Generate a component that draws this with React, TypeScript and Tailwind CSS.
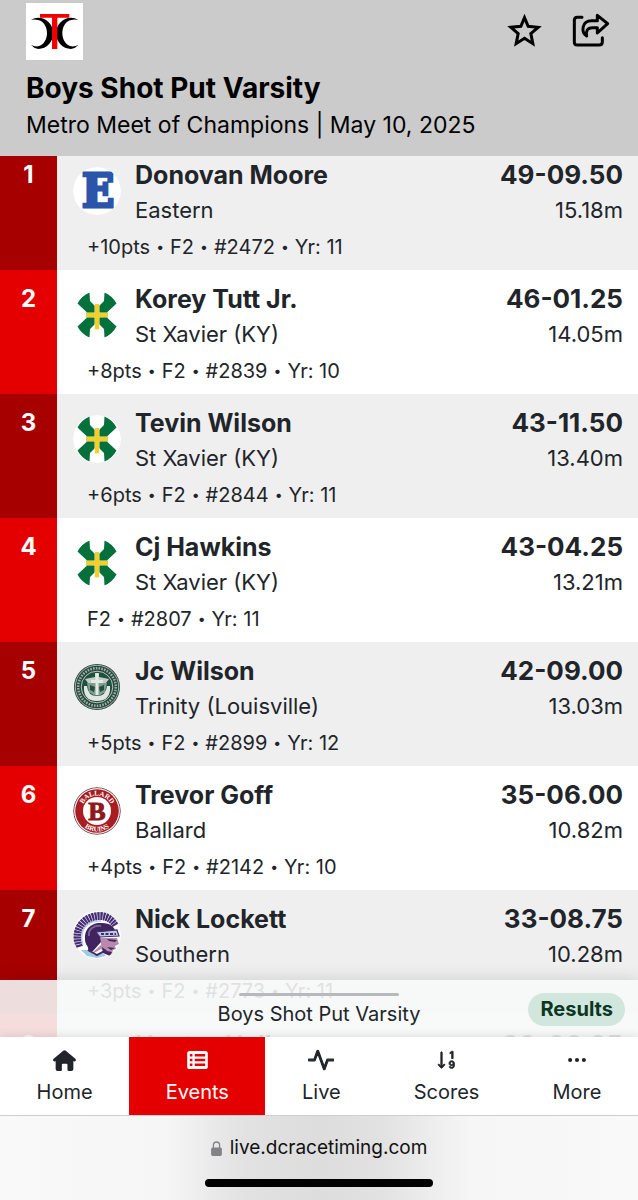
import React from "react";
import { BsActivity, BsSortNumericDown, BsThreeDots } from "react-icons/bs";

type School = "eastern" | "stx" | "trinity" | "ballard" | "southern";

interface Entry {
  place: number;
  name: string;
  school: string;
  logo: School;
  mark: string;
  metric: string;
  details: string[];
}

const entries: Entry[] = [
  { place: 1, name: "Donovan Moore", school: "Eastern", logo: "eastern", mark: "49-09.50", metric: "15.18m", details: ["+10pts", "F2", "#2472", "Yr: 11"] },
  { place: 2, name: "Korey Tutt Jr.", school: "St Xavier (KY)", logo: "stx", mark: "46-01.25", metric: "14.05m", details: ["+8pts", "F2", "#2839", "Yr: 10"] },
  { place: 3, name: "Tevin Wilson", school: "St Xavier (KY)", logo: "stx", mark: "43-11.50", metric: "13.40m", details: ["+6pts", "F2", "#2844", "Yr: 11"] },
  { place: 4, name: "Cj Hawkins", school: "St Xavier (KY)", logo: "stx", mark: "43-04.25", metric: "13.21m", details: ["F2", "#2807", "Yr: 11"] },
  { place: 5, name: "Jc Wilson", school: "Trinity (Louisville)", logo: "trinity", mark: "42-09.00", metric: "13.03m", details: ["+5pts", "F2", "#2899", "Yr: 12"] },
  { place: 6, name: "Trevor Goff", school: "Ballard", logo: "ballard", mark: "35-06.00", metric: "10.82m", details: ["+4pts", "F2", "#2142", "Yr: 10"] },
  { place: 7, name: "Nick Lockett", school: "Southern", logo: "southern", mark: "33-08.75", metric: "10.28m", details: ["+3pts", "F2", "#2773", "Yr: 11"] },
];

function TimingLogo() {
  const crescent =
    "M15 51Q25 44 37 44C62 44 82 66 82 91C82 116 62 138 37 138Q25 137 15 126Q25 131 36 130C52 128 63 110 63 91C63 70 52 54 36 51Q25 48 15 51Z";
  return (
    <svg viewBox="0 0 171 171" className="size-[57px] bg-white" aria-hidden="true">
      <path d={crescent} />
      <path d={crescent} transform="translate(172 0) scale(-1 1)" />
      <path d="M42 33H130V44H94V138H78V44H42Z" fill="#f00000" />
    </svg>
  );
}

function StarIcon() {
  return (
    <svg viewBox="81 40 104 102" className="h-[34px] w-[35px]" fill="none" stroke="currentColor" strokeWidth="9" aria-hidden="true">
      <path d="M133 54L144 80L174 83L152 102L158 132L133 116L108 132L114 102L92 83L122 80Z" />
    </svg>
  );
}

function ShareIcon() {
  return (
    <svg viewBox="276 40 114 102" className="h-[34px] w-[38px]" fill="none" stroke="currentColor" strokeWidth="9" strokeLinecap="round" strokeLinejoin="round" aria-hidden="true">
      <path d="M306 53H292Q283 53 283 62V127Q283 136 292 136H357Q367 136 367 127V114" />
      <path d="M320 109C303 98 304 63 335 63H352V47L383 72L352 100V84H337C322 84 317 94 320 109Z" />
    </svg>
  );
}

function HomeIcon() {
  return (
    <svg viewBox="0 0 70 64" className="h-[21px] w-[23px]" fill="currentColor" aria-hidden="true">
      <path d="M31 2Q35 -1 39 2L68 27Q71 30 69 33Q67 36 63 34L62 33V58Q62 64 56 64H48Q44 64 44 60V45Q44 42 41 42H30Q27 42 27 45V60Q27 64 23 64H14Q8 64 8 58V33L7 34Q3 36 1 33Q-1 30 2 27Z" />
    </svg>
  );
}

function EventsIcon() {
  return (
    <svg viewBox="0 0 63 55" className="h-[18px] w-[21px]" aria-hidden="true">
      <rect width="63" height="55" rx="8" fill="white" />
      <path d="M8 9H16V17H8ZM23 9H55V17H23ZM8 24H16V31H8ZM23 24H55V31H23ZM8 38H16V46H8ZM23 38H55V46H23Z" fill="#e50000" />
    </svg>
  );
}

function LockIcon() {
  return (
    <svg viewBox="0 0 33 46" className="h-[15px] w-[11px] text-[#838385]" aria-hidden="true">
      <path d="M7 22V13Q7 3 16.5 3Q26 3 26 13V22" fill="none" stroke="currentColor" strokeWidth="4" />
      <rect y="20" width="33" height="26" rx="5" fill="currentColor" />
    </svg>
  );
}

function SchoolLogo({ school, id }: { school: School; id: number }) {
  const frame = "size-12 rounded-full";
  if (school === "eastern") {
    return (
      <svg viewBox="0 0 48 48" className={frame} aria-hidden="true">
        <circle cx="24" cy="24" r="24" fill="white" />
        <text x="25" y="40" textAnchor="middle" fontSize="47" fontWeight="700" fill="#2a55aa" stroke="#2a55aa" strokeWidth="3" className="font-['DejaVu_Serif_Condensed','DejaVu_Serif',serif]">E</text>
      </svg>
    );
  }
  if (school === "stx") {
    return (
      <svg viewBox="0 0 48 48" className={frame} aria-hidden="true">
        <circle cx="24" cy="24" r="24" fill="white" />
        <path d="M4.5 12.5A24 24 0 0 1 16.5 1.5L17 10L22 15H26L31 10L31.5 1.5A24 24 0 0 1 43.5 12.5L34.5 21V27L43.5 35.5A24 24 0 0 1 31.5 46.5L31 38L26 33H22L17 38L16.5 46.5A24 24 0 0 1 4.5 35.5L13.5 27V21Z" fill="#04713d" />
        <path d="M21.5 13H26.5V21.5H35V26.5H26.5V39H21.5V26.5H13V21.5H21.5Z" fill="#e9eec5" />
        <path d="M22 13H26V22H35V26H26V38H22V26H13V22H22Z" fill="#f6cf20" />
      </svg>
    );
  }
  if (school === "trinity") {
    return (
      <svg viewBox="0 0 48 48" className={frame} aria-hidden="true">
        <circle cx="24" cy="24" r="23" fill="#27483d" />
        <circle cx="24" cy="24" r="21.7" fill="none" stroke="#a3b1ab" strokeWidth="1" />
        <circle cx="24" cy="24" r="18.8" fill="none" stroke="#9cada5" strokeWidth="2.6" strokeDasharray="1.6 1.2" />
        <circle cx="24" cy="24" r="15.8" fill="#1f5140" stroke="#b7c3be" strokeWidth="1" />
        <path d="M12 16L22 14V10H26V14L36 16L33 20H15Z" fill="#c3cec8" />
        <path d="M14 20H34L32 29Q24 36 16 29Z" fill="#7f9e90" />
        <path d="M17 22L22 24L21 29L17 27ZM31 22L26 24L27 29L31 27Z" fill="#254e40" />
        <path d="M22.5 10H25.5V17H30V20H25.5V32H22.5V20H18V17H22.5Z" fill="#e4e9e5" />
        <path d="M11 23H14Q15 33 24 33Q33 33 34 23H37Q38 38 24 38Q10 38 11 23Z" fill="#e2e6e2" />
      </svg>
    );
  }
  if (school === "ballard") {
    return (
      <svg viewBox="0 0 48 48" className={frame} aria-hidden="true">
        <circle cx="24" cy="24" r="23.3" fill="white" stroke="#70474a" strokeWidth="1" />
        <circle cx="24" cy="24" r="21.8" fill="#a91c22" />
        <circle cx="24" cy="24" r="14" fill="white" />
        <path id={`ballard-top-${id}`} d="M8.5 24A15.5 15.5 0 0 1 39.5 24" fill="none" />
        <path id={`ballard-bottom-${id}`} d="M3.5 24A20.5 20.5 0 0 0 44.5 24" fill="none" />
        <g fill="white" fontSize="7" fontWeight="700" textAnchor="middle" className="font-['Liberation_Serif',serif]">
          <text><textPath href={`#ballard-top-${id}`} startOffset="50%">BALLARD</textPath></text>
          <text><textPath href={`#ballard-bottom-${id}`} startOffset="50%">BRUINS</textPath></text>
        </g>
        <text x="24" y="33" textAnchor="middle" fontSize="26" fontWeight="700" fill="#8f1720" stroke="#8f1720" strokeWidth="1" className="font-['Liberation_Serif',serif]">B</text>
      </svg>
    );
  }
  return (
    <svg viewBox="0 0 48 48" className={frame} aria-hidden="true">
      <circle cx="24" cy="24" r="24" fill="white" />
      <path d="M6 36C0 17 12 5 27 5C35 5 40 9 43 14" fill="none" stroke="#442c75" strokeWidth="8" strokeDasharray="2.2 .6" />
      <path d="M10 34C5 20 14 9 28 10" fill="none" stroke="#b6cce7" strokeWidth="1.5" />
      <path d="M13 33C9 19 18 11 29 12C37 12 42 16 43 22L27 23L28 31L20 40L13 43C17 39 15 36 13 33Z" fill="#41245f" />
      <path d="M16 25C15 18 21 14 28 15" fill="none" stroke="#746192" strokeWidth="2" />
      <path d="M23 21L44 19L46 25L27 26Z" fill="#b8cbe4" stroke="#442b6e" strokeWidth="1.2" />
      <path d="M28 23H43" stroke="#442b6e" strokeWidth="2" strokeDasharray="3 1.5" />
      <path d="M28 27H44L46 33L42 35L43 38L40 39L39 43L32 41L28 38L23 41L19 42L28 34Z" fill="#b68bad" />
      <path d="M34 28L44 29L42 31L36 30ZM34 36L42 37L38 39ZM29 36L34 40L39 41L37 45L30 42Z" fill="#482665" />
      <path d="M8 39L15 39L21 44L29 41L33 45L24 47L14 45Z" fill="#9ccce5" />
      <path d="M15 39L24 44L33 39" fill="none" stroke="#47285f" strokeWidth="2" />
    </svg>
  );
}

function ResultRow({ entry }: { entry: Entry }) {
  return (
    <li className="group flex h-[124px] text-[#212529] odd:bg-[#efefef] even:bg-white">
      <div className="w-[57px] shrink-0 bg-[#e50000] pt-[11px] text-center text-2xl leading-9 font-bold text-white group-odd:bg-[#a60000]">
        {entry.place}
      </div>
      <div className="min-w-0 flex-1 pt-[11px] pr-[15px] pl-4">
        <div className="flex">
          <div className="mr-[14px] shrink-0 pt-[10px]">
            <SchoolLogo school={entry.logo} id={entry.place} />
          </div>
          <div className="min-w-0 flex-1">
            <h2 className="truncate text-[25px] leading-9 font-bold">{entry.name}</h2>
            <p className="truncate text-[22px] leading-[34px]">{entry.school}</p>
          </div>
          <div className="text-right">
            <p className="text-[26px] leading-9 font-bold">{entry.mark}</p>
            <p className="text-[22px] leading-[34px]">{entry.metric}</p>
          </div>
        </div>
        <p className="flex items-center gap-[6px] pl-[14px] text-[20px] leading-10">
          {entry.details.map((detail, index) => (
            <React.Fragment key={detail}>
              {index > 0 && <span className="text-sm">•</span>}
              <span>{detail}</span>
            </React.Fragment>
          ))}
        </p>
      </div>
    </li>
  );
}

const tabs = [
  { label: "Home", icon: <HomeIcon />, active: false },
  { label: "Events", icon: <EventsIcon />, active: true },
  { label: "Live", icon: <BsActivity className="size-[26px]" strokeWidth={0.7} />, active: false },
  { label: "Scores", icon: <BsSortNumericDown className="size-[22px]" strokeWidth={0.6} />, active: false },
  { label: "More", icon: <BsThreeDots className="size-[22px]" />, active: false },
];

export default function App() {
  return (
    <div className="flex h-dvh flex-col overflow-hidden bg-white font-['Inter',sans-serif]">
      <header className="shrink-0 bg-[#cbcbcb] px-[26px] pt-[3px] pb-[14px] text-black">
        <div className="flex items-start justify-between">
          <TimingLogo />
          <div className="flex gap-[30px] pt-[10px] pr-[2px]">
            <button type="button" aria-label="Add to favorites"><StarIcon /></button>
            <button type="button" aria-label="Share"><ShareIcon /></button>
          </div>
        </div>
        <h1 className="mt-2 text-[28px] leading-10 font-bold">Boys Shot Put Varsity</h1>
        <p className="text-[23px] leading-[34px]">Metro Meet of Champions | May 10, 2025</p>
      </header>

      <main className="relative min-h-0 flex-1 overflow-hidden">
        <ol className="-mt-[10px]">
          {entries.map((entry) => <ResultRow key={entry.place} entry={entry} />)}
          <li className="flex h-[124px] bg-white text-[#212529]">
            <div className="w-[57px] shrink-0 bg-[#e50000] pt-[13px] text-center text-2xl leading-9 font-bold text-white">8</div>
            <div className="flex flex-1 justify-between pt-[13px] pr-[15px] pl-[78px] leading-9 font-bold">
              <h2 className="text-[25px]">Hunter Hall</h2>
              <p className="text-[26px]">33-06.25</p>
            </div>
          </li>
        </ol>
        <section className="absolute inset-x-0 bottom-0 flex h-[57px] items-start justify-center bg-[#f7f8f8]/89 shadow-[0_0_16px_rgba(0,0,0,0.15)]">
          <div className="absolute top-[13px] h-[3px] w-40 rounded-full bg-[#b8b9bb]" />
          <p className="pt-5 text-[20px] leading-7 text-[#212529]">Boys Shot Put Varsity</p>
          <span className="absolute top-[13px] right-[13px] rounded-full bg-[#d1e7dd] px-3 text-[20px] leading-[33px] font-bold text-[#0a3622]">Results</span>
        </section>
      </main>

      <nav className="relative flex h-[79px] shrink-0 border-b border-[#cfcfcf] bg-white shadow-[0_-2px_8px_rgba(0,0,0,0.1)]">
        {tabs.map((tab) => (
          <a
            key={tab.label}
            href={`#${tab.label.toLowerCase()}`}
            aria-current={tab.active ? "page" : undefined}
            className={`flex flex-auto flex-col items-center pt-[11px] text-xl leading-7 ${tab.active ? "bg-[#e50000] text-white" : "text-[#212529]"}`}
          >
            <span className="flex h-6 items-center">{tab.icon}</span>
            <span className="pt-[6px]">{tab.label}</span>
          </a>
        ))}
      </nav>

      <footer className="relative flex h-[84px] shrink-0 flex-col items-center bg-[linear-gradient(90deg,#f9f9f9_0%,#f6f6f6_26%,#e2e2e2_38%,#dddddd_50%,#e2e2e2_60%,#f6f6f6_74%,#f9f9f9_100%)] pt-4">
        <p className="flex items-center gap-2 text-[19px] leading-8 text-[#111111]">
          <LockIcon />
          live.dcracetiming.com
        </p>
        <div className="mt-[15px] h-2 w-[228px] rounded-full bg-black" />
      </footer>
    </div>
  );
}
